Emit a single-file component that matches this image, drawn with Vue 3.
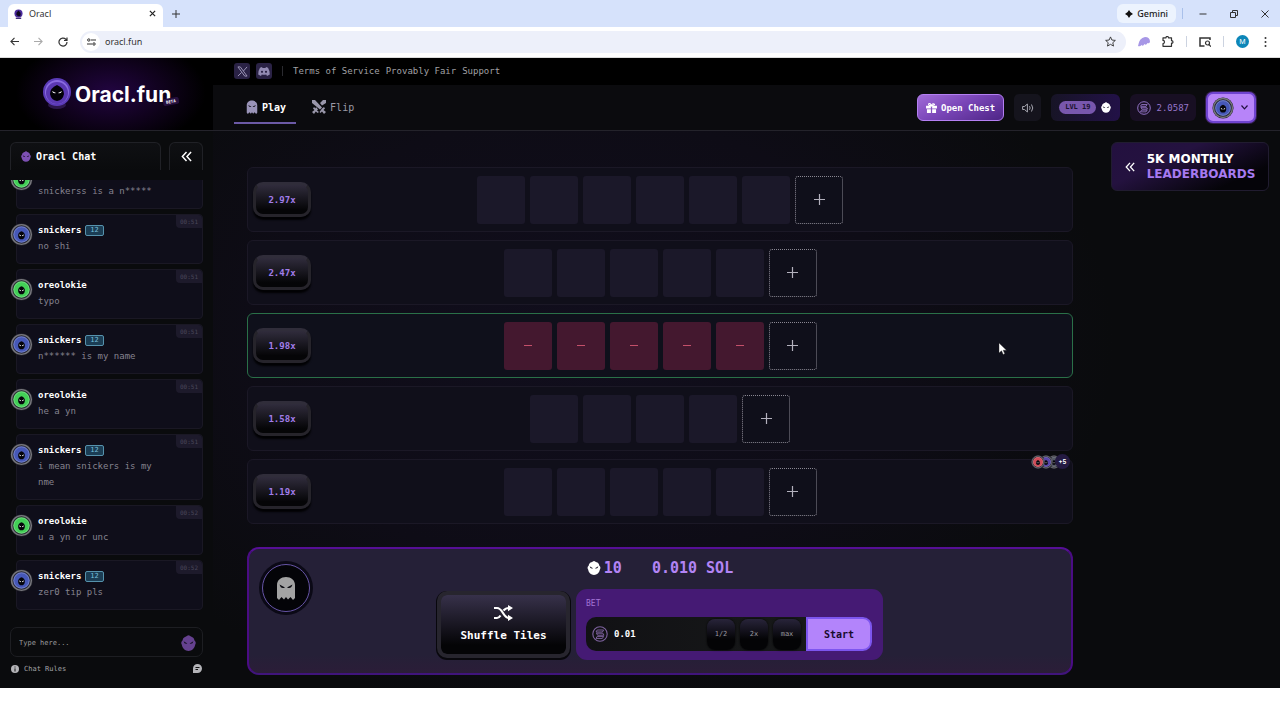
<script setup>
import { ref } from 'vue'

const address = ref('oracl.fun')
const bet = ref('0.01')
const draft = ref('')

const messages = [
  { tone: 'green', text: 'snickerss is a n*****' },
  { user: 'snickers', tone: 'blue', level: 12, time: '00:51', text: 'no shi' },
  { user: 'oreolokie', tone: 'green', time: '00:51', text: 'typo' },
  { user: 'snickers', tone: 'blue', level: 12, time: '00:51', text: 'n****** is my name' },
  { user: 'oreolokie', tone: 'green', time: '00:51', text: 'he a yn' },
  { user: 'snickers', tone: 'blue', level: 12, time: '00:51', text: 'i mean snickers is my nme' },
  { user: 'oreolokie', tone: 'green', time: '00:52', text: 'u a yn or unc' },
  { user: 'snickers', tone: 'blue', level: 12, time: '00:52', text: 'zer0 tip pls' }
]

const rows = [
  { mult: '2.97x', tiles: 6 },
  { mult: '2.47x', tiles: 5 },
  { mult: '1.98x', tiles: 5, active: true },
  { mult: '1.58x', tiles: 4 },
  { mult: '1.19x', tiles: 5, players: true }
]
</script>

<template>
  <div class="screen">
    <svg class="defs" aria-hidden="true">
      <symbol id="mask" viewBox="0 0 20 21">
        <path d="M10 0C11.500 0 12 1.500 14 2C17 3 17.500 5 18 7C20 8.500 20 11 19 12.500C18 18 14.500 21 10 21S2 18 1 12.500C0 11 0 8.500 2 7C2.500 5 3 3 6 2C8 1.500 8.500 0 10 0Z" fill="currentColor" />
        <path d="M3.500 8L8.500 11Q4.500 12.500 3.500 8ZM16.500 8L11.500 11Q15.500 12.500 16.500 8Z" fill="#141020" />
      </symbol>
      <symbol id="ghost" viewBox="0 0 20 24">
        <path d="M1 22V9C1 4 5 1 10 1S19 4 19 9V22L17 24L14.500 21L12 23.500L10 21L8 23.500L5.500 21L3 24Z" fill="currentColor" />
        <path d="M3.500 8.500L9 11.500Q5 13.500 3.500 8.500ZM16.500 8.500L11 11.500Q15 13.500 16.500 8.500Z" fill="#0a0a10" />
      </symbol>
      <symbol id="coin" viewBox="0 0 20 20">
        <circle cx="10" cy="10" r="9" fill="none" stroke="currentColor" stroke-width="1.400" />
        <path d="M6.500 5H14.500L13 7.500H5ZM5.500 9H13.500L15 11.500H7ZM6.500 13H14.500L13 15.500H5Z" fill="none" stroke="currentColor" stroke-width="1.200" stroke-linejoin="round" />
      </symbol>
      <symbol id="face" viewBox="0 0 24 24">
        <circle cx="12" cy="12" r="11.500" fill="#26262e" />
        <circle cx="12" cy="12" r="10.300" fill="none" stroke="#77777d" stroke-width="1.500" />
        <circle cx="12" cy="12" r="8.600" fill="currentColor" />
        <circle cx="12" cy="12" r="8" fill="none" stroke="#fff" stroke-opacity=".25" />
        <path d="M12 8.500Q16 10 15.500 13.500Q15 17 12 17T8.500 13.500Q8 10 12 8.500Z" fill="#05050b" />
        <path d="M9.700 12.500L11.300 13.300M14.300 12.500L12.700 13.300" stroke="#fff" />
      </symbol>
      <symbol id="chevrons" viewBox="0 0 12 12">
        <path d="M6 1L1.500 6L6 11M11 1L6.500 6L11 11" fill="none" stroke="currentColor" stroke-width="1.600" />
      </symbol>
    </svg>

    <header class="browser">
      <div class="tabs">
        <div class="tab">
          <svg class="favicon" viewBox="0 0 20 22"><circle cx="10" cy="10" r="9" fill="#4a2a9c" /><path d="M10 3Q16 7 15 12T10 16T5 12Q4 7 10 3Z" fill="#100720" /><path d="M4 19H16V22H4Z" fill="#3b2277" /></svg>
          <span class="tab-name">Oracl</span>
          <button class="plain" aria-label="Close tab"><svg width="7" height="7" viewBox="0 0 8 8"><path d="M1 1L7 7M7 1L1 7" stroke="#222" stroke-width="1.400" /></svg></button>
        </div>
        <button class="plain new-tab" aria-label="New tab"><svg width="8" height="8" viewBox="0 0 8 8"><path d="M4 0V8M0 4H8" stroke="#333" /></svg></button>
        <button class="gemini"><svg width="8" height="8" viewBox="0 0 10 10"><path d="M5 0Q6.500 3.500 10 5Q6.500 6.500 5 10Q3.500 6.500 0 5Q3.500 3.500 5 0Z" fill="#111" /></svg>Gemini</button>
        <span class="bar-sep"></span>
        <div class="window">
          <button class="plain" aria-label="Minimise"><svg width="8" height="8" viewBox="0 0 8 8"><path d="M0.500 4H7.500" stroke="#333" /></svg></button>
          <button class="plain" aria-label="Restore"><svg width="8" height="8" viewBox="0 0 8 8"><path d="M.5 2.500H5.500V7.500H.5ZM2.500 2V.5H7.500V5.500H6" fill="none" stroke="#333" /></svg></button>
          <button class="plain" aria-label="Close window"><svg width="8" height="8" viewBox="0 0 8 8"><path d="M.5 .5L7.500 7.500M7.500 .5L.5 7.500" stroke="#333" /></svg></button>
        </div>
      </div>
      <div class="toolbar">
        <div class="history">
          <button class="plain" aria-label="Back"><svg width="9" height="9" viewBox="0 0 10 10"><path d="M10 5H1M5 1L1 5L5 9" fill="none" stroke="#333" stroke-width="1.200" /></svg></button>
          <button class="plain" aria-label="Forward"><svg width="9" height="9" viewBox="0 0 10 10"><path d="M0 5H9M5 1L9 5L5 9" fill="none" stroke="#aaa" stroke-width="1.200" /></svg></button>
          <button class="plain" aria-label="Reload"><svg width="10" height="10" viewBox="0 0 10 10"><path d="M9 5A4 4 0 1 1 7.800 2.200L9 3.400M9 .5V3.500H6" fill="none" stroke="#333" stroke-width="1.200" /></svg></button>
        </div>
        <div class="omnibox">
          <span class="site"><svg width="9" height="8" viewBox="0 0 9 8"><path d="M4 2H9M0 6H5" stroke="#333" stroke-width="1.200" /><circle cx="1.800" cy="2" r="1.200" fill="none" stroke="#333" /><circle cx="7" cy="6" r="1.200" fill="none" stroke="#333" /></svg></span>
          <input v-model="address" aria-label="Address" />
          <button class="plain" aria-label="Bookmark"><svg width="11" height="11" viewBox="0 0 12 12"><path d="M6 1L7.500 4.400L11.300 4.800L8.500 7.300L9.300 11L6 9.100L2.700 11L3.500 7.300L.7 4.800L4.500 4.400Z" fill="none" stroke="#333" stroke-linejoin="round" /></svg></button>
        </div>
        <div class="extensions">
          <svg width="12" height="10" viewBox="0 0 12 10"><path d="M0 9Q1 1 7 0Q12 0 12 5Q11 7 9.500 6Q8 9 6.500 7Q5 10 3.500 8Q2 10 0 9Z" fill="#a797e6" /></svg>
          <svg width="12" height="11" viewBox="0 0 12 11"><path d="M1 1.800H4Q4 .5 5.200 .5T6.500 1.800H9.500V4.700Q11 4.700 11 6T9.500 7.200V10.300H1V7.700Q2.500 7.500 2.500 6T1 4.400Z" fill="none" stroke="#333" stroke-width="1.200" stroke-linejoin="round" /></svg>
          <span class="bar-sep pale"></span>
          <svg width="12" height="10" viewBox="0 0 12 10"><path d="M5.500 9H1V1H11V3" fill="none" stroke="#333" stroke-width="1.500" /><circle cx="8.500" cy="6" r="2" fill="none" stroke="#333" stroke-width="1.200" /><path d="M10 7.500L12 9.700" stroke="#333" stroke-width="1.200" /></svg>
          <span class="bar-sep pale"></span>
          <span class="profile">M</span>
          <svg class="menu" width="3" height="10" viewBox="0 0 3 10"><circle cx="1.500" cy="1" r="1" fill="#333" /><circle cx="1.500" cy="5" r="1" fill="#333" /><circle cx="1.500" cy="9" r="1" fill="#333" /></svg>
        </div>
      </div>
    </header>

    <div class="site-page">
      <div class="brand">
        <svg width="30" height="34" viewBox="0 0 30 34"><ellipse cx="15" cy="28" rx="9" ry="4" fill="#2c174d" /><circle cx="15" cy="15" r="14" fill="#5b3bb8" /><circle cx="15" cy="15" r="12" fill="#8a6be0" /><circle cx="15" cy="16" r="11" fill="#5a38b2" /><path d="M15 8Q22 11 22 17Q21 23 15 24Q9 23 8 17Q8 11 15 8Z" fill="#020108" /><path d="M10 14L14 16Q11 17 10 14ZM20 14L16 16Q19 17 20 14Z" fill="#fff" /></svg>
        <span class="brand-name">Oracl.fun</span>
        <span class="beta">BETA</span>
      </div>

      <div class="top">
        <nav class="links">
          <a href="#x" class="social" aria-label="X"><svg width="11" height="11" viewBox="0 0 12 12"><path d="M1 1H3.600L11 11H8.400ZM11 1L7 5.500M5 7L1 11" fill="none" stroke="#a29bbd" /></svg></a>
          <a href="#discord" class="social" aria-label="Discord"><svg width="12" height="9" viewBox="0 0 12 9"><path d="M4 0L2 .8Q0 4 .2 7.500L3 9L3.800 7.500Q6 8 8.200 7.500L9 9L11.800 7.500Q12 4 10 .8L8 0L7.500 1Q6 .8 4.500 1Z" fill="#938bb4" /><circle cx="4" cy="4.800" r="1.100" fill="#2a2245" /><circle cx="8" cy="4.800" r="1.100" fill="#2a2245" /></svg></a>
          <span class="divider"></span>
          <a href="#terms">Terms of Service</a>
          <a href="#fair">Provably Fair</a>
          <a href="#support">Support</a>
        </nav>
        <div class="navbar">
          <nav class="modes">
            <a href="#play" class="mode current"><svg width="12" height="14" class="mode-ghost"><use href="#ghost" /></svg>Play</a>
            <a href="#flip" class="mode"><svg width="14" height="14" viewBox="0 0 14 14"><path d="M0 0H3L10 7.500L8 9.500L0 3ZM14 0H11L8 3L10 5.500L14 3ZM4 7L6 9.500L5 10.500L7 12L5.500 13L3.800 11.500L2 14L0 12L2.500 10L1 8.500L2 7L3.500 8.500ZM10 8.500L12 7L13 8.500L11.500 10L14 12L12 14L10 11.500L8.500 13L7.500 12Z" fill="#9a97aa" /></svg>Flip</a>
          </nav>
          <div class="account">
            <button class="chest"><svg width="11" height="10" viewBox="0 0 12 11"><path d="M0 3H5.300V6H0ZM6.700 3H12V6H6.700ZM1 7H5.300V11H1ZM6.700 7H11V11H6.700Z" fill="#fff" /><path d="M6 3Q2 3 3 1T6 3Q7 0 8.800 1T6 3" fill="none" stroke="#fff" stroke-width="1.200" /></svg>Open Chest</button>
            <button class="sound" aria-label="Sound"><svg width="12" height="10" viewBox="0 0 12 10"><path d="M.6 3.500H2.500L5.400 1V9L2.500 6.500H.6ZM7.500 3.200Q8.800 5 7.500 6.800M9.500 1.500Q12 5 9.500 8.500" fill="none" stroke="#a6a6b0" /></svg></button>
            <div class="level"><span class="lvl">LVL 19</span><svg width="10" height="11" class="white"><use href="#mask" /></svg></div>
            <div class="balance"><svg width="14" height="14"><use href="#coin" /></svg>2.0587</div>
            <button class="user" aria-label="Account"><svg width="22" height="22" class="blue"><use href="#face" /></svg><svg width="7" height="5" viewBox="0 0 7 5"><path d="M.5 .5L3.500 3.800L6.500 .5" fill="none" stroke="#21103f" stroke-width="1.200" /></svg></button>
          </div>
        </div>
      </div>

      <aside class="chat">
        <div class="chat-head">
          <h2><svg width="10" height="11" class="violet"><use href="#mask" /></svg>Oracl Chat</h2>
          <button aria-label="Collapse chat"><svg width="11" height="11"><use href="#chevrons" /></svg></button>
        </div>
        <div class="feed">
          <article v-for="(m, i) in messages" :key="i" class="message">
            <svg class="avatar" :class="m.tone"><use href="#face" /></svg>
            <div class="who"><strong v-if="m.user">{{ m.user }}</strong><span v-if="m.level" class="rank">{{ m.level }}</span></div>
            <p>{{ m.text }}</p>
            <time v-if="m.time">{{ m.time }}</time>
          </article>
        </div>
        <div class="compose">
          <input v-model="draft" placeholder="Type here..." aria-label="Chat message" />
          <svg width="15" height="16" class="dim"><use href="#mask" /></svg>
        </div>
        <div class="chat-foot">
          <a href="#rules"><svg width="8" height="8" viewBox="0 0 8 8"><circle cx="4" cy="4" r="4" fill="#b4b4b8" /><path d="M4 1.500V2.500M4 3.400V6.500" stroke="#111" /></svg>Chat Rules</a>
          <button class="plain" aria-label="Chat options"><svg width="9" height="9" viewBox="0 0 9 9"><path d="M4.500 0A4.500 4.500 0 1 1 4.500 9H0V4.500A4.500 4.500 0 0 1 4.500 0Z" fill="#b4b4b8" /><path d="M2.500 3.500H6.500M2.500 5.500H5" stroke="#111" /></svg></button>
        </div>
      </aside>

      <main class="game">
        <section class="board">
          <div v-for="row in rows" :key="row.mult" class="row" :class="{ active: row.active }">
            <button class="mult">{{ row.mult }}</button>
            <div class="tiles">
              <span v-for="n in row.tiles" :key="n" class="tile"><i v-if="row.active"></i></span>
              <button class="add" aria-label="Add tile"><svg width="11" height="11" viewBox="0 0 11 11"><path d="M5.500 0V11M0 5.500H11" stroke="#b3b1bd" stroke-width="1.200" /></svg></button>
            </div>
            <div v-if="row.players" class="players">
              <svg class="red"><use href="#face" /></svg><svg class="indigo"><use href="#face" /></svg><svg class="grey"><use href="#face" /></svg><span>+5</span>
            </div>
            <svg v-if="row.active" class="pointer" viewBox="0 0 10 14"><path d="M1 1V11L3.500 8.800L5.200 12.500L6.800 11.800L5.200 8.200H8.500Z" fill="#fff" stroke="#222" stroke-width=".4" /></svg>
          </div>
        </section>

        <section class="console">
          <div class="ghost-badge"><svg width="20" height="24"><use href="#ghost" /></svg></div>
          <div class="play-area">
            <div class="totals"><span class="count"><svg width="14" height="14" class="white"><use href="#mask" /></svg>10</span><span>0.010 SOL</span></div>
            <div class="actions">
              <button class="shuffle"><svg width="19" height="16" viewBox="0 0 19 16"><path d="M0 3H3Q6 3 9 8T15 13H16M0 13H3Q5 13 6.500 10.500M9.500 5.500Q11.500 3 15 3H16" fill="none" stroke="#fff" stroke-width="2.200" /><path d="M14 0L19 3L14 6.300ZM14 9.700L19 13L14 16Z" fill="#fff" /></svg>Shuffle Tiles</button>
              <div class="bet">
                <label for="bet">BET</label>
                <div class="bet-line">
                  <svg width="16" height="16"><use href="#coin" /></svg>
                  <input id="bet" v-model="bet" />
                  <button class="quick">1/2</button>
                  <button class="quick">2x</button>
                  <button class="quick">max</button>
                  <button class="start">Start</button>
                </div>
              </div>
            </div>
          </div>
        </section>
      </main>

      <aside class="side">
        <button class="leaders"><svg width="10" height="10"><use href="#chevrons" /></svg><span>5K MONTHLY<br /><b>LEADERBOARDS</b></span></button>
      </aside>
    </div>
  </div>
</template>

<style>
body { background: #fff; }
</style>

<style scoped>
.screen, .screen * { box-sizing: border-box; }
.screen { font-family: "DejaVu Sans Mono", "Liberation Mono", monospace; font-size: 9px; color: #fff; }
.screen svg { display: block; flex: none; }
.screen .defs { position: absolute; width: 0; height: 0; }
button { font-family: inherit; color: inherit; border: 0; padding: 0; cursor: pointer; display: flex; align-items: center; justify-content: center; }
input { font-family: inherit; border: 0; outline: 0; background: none; padding: 0; min-width: 0; }
a { color: inherit; text-decoration: none; }
.plain { background: none; }

.browser { font-family: "Noto Sans", sans-serif; color: #333; }
.tabs { height: 27px; background: #d6e2fb; display: flex; align-items: center; padding: 0 11px 0 8px; }
.tab { align-self: flex-end; width: 155px; height: 23px; background: #fff; border-radius: 6px 6px 0 0; display: flex; align-items: center; gap: 6px; padding: 0 7px 4px 6px; }
.favicon { width: 9px; height: 10px; }
.tab-name { flex: 1; font-size: 9px; }
.new-tab { margin-left: 9px; margin-right: auto; }
.gemini { height: 19px; padding: 0 8px; gap: 4px; border-radius: 6px; background: #ecf3fe; font-size: 9px; font-weight: 500; color: #222; }
.bar-sep { width: 1px; height: 11px; background: #a9c0ea; margin-left: 6px; }
.bar-sep.pale { background: #ccd3e0; margin: 0; }
.window { display: flex; gap: 23px; margin-left: 16px; }
.toolbar { height: 31px; background: #fff; border-bottom: 1px solid #dcdcdc; display: flex; align-items: center; padding: 0 13px 1px 10px; }
.history { display: flex; gap: 15px; }
.omnibox { flex: 1; height: 22px; margin: 0 12px; border-radius: 11px; background: #edf0fa; display: flex; align-items: center; padding: 0 10px 0 2px; gap: 5px; }
.site { width: 18px; height: 18px; border-radius: 9px; background: #fff; display: grid; place-items: center; }
.omnibox input { flex: 1; font-size: 9px; color: #333; }
.extensions { display: flex; align-items: center; gap: 12px; }
.menu { margin-left: 3px; }
.profile { width: 13px; height: 13px; border-radius: 7px; background: #0d86b8; color: #fff; font-size: 7px; display: grid; place-items: center; }

.site-page {
  display: grid; grid-template-columns: 213px minmax(0, 1fr) 207px; grid-template-rows: 73px auto;
  background: radial-gradient(ellipse 42% 60% at 45% 45%, #110e1d 0%, #0e0c16 60%, #0a0b0d 100%);
}
.brand { position: relative; display: flex; align-items: center; padding-left: 42px; gap: 3px; background: radial-gradient(ellipse 95px 55px at 52% 48%, #220541 0%, #10021d 55%, #000 100%); border-bottom: 1px solid #24232b; }
.brand-name { font-family: Inter, sans-serif; font-weight: 700; font-size: 21px; }
.beta { position: absolute; left: 163px; top: 40px; font-size: 4px; font-weight: 700; padding: 1px 3px; border-radius: 2px; background: #26103f; transform: rotate(-10deg); }
.top { grid-column: 2 / 4; display: grid; grid-template-rows: 27px 46px; }
.links { background: #000; display: flex; align-items: center; gap: 6px; padding: 0 0 1px 21px; color: #a1a1a5; }
.social { width: 16px; height: 16px; border-radius: 3px; background: #2a2245; display: grid; place-items: center; }
.divider { width: 1px; height: 10px; background: #2a2a2f; margin: 0 4px; }
.navbar { background: #0b0b0e; border-bottom: 1px solid #24232b; display: flex; align-items: center; justify-content: space-between; padding: 0 24px 0 21px; }
.modes { display: flex; align-self: stretch; gap: 4px; }
.mode { display: flex; align-items: center; gap: 4px; padding: 7px 10px 0 12px; margin-bottom: 6px; border-bottom: 2px solid transparent; font-size: 10px; color: #9a98a5; }
.mode.current { border-color: #6c5aa6; color: #fff; font-weight: 700; }
.mode-ghost { color: #9a94b8; }
.account { display: flex; align-items: center; gap: 10px; }
.chest { height: 27px; padding: 0 8px; gap: 4px; border-radius: 6px; border: 1px solid #b47ff2; background: linear-gradient(155deg, #a16cd8 0%, #7a46b8 45%, #4e2586 100%); font-weight: 700; font-size: 9px; }
.sound { width: 27px; height: 27px; border-radius: 5px; background: #15141d; }
.level { height: 27px; padding: 0 9px 0 8px; gap: 5px; border-radius: 6px; display: flex; align-items: center; background: linear-gradient(90deg, #171426, #221147); }
.lvl { height: 13px; padding: 0 6px; border-radius: 7px; background: #7857ad; color: #1b1230; font-size: 7px; font-weight: 700; line-height: 13px; }
.white { color: #fff; }
.balance { height: 27px; padding: 0 7px; gap: 5px; border-radius: 6px; display: flex; align-items: center; background: #180f23; color: #9676cb; }
.user { width: 50px; height: 31px; gap: 7px; padding-right: 2px; border-radius: 7px; background: #b784f9; border: 2px solid #7044d0; box-shadow: 0 0 0 1px #35204f; }
.blue { color: #4658b8; }
.green { color: #43cf57; }
.red { color: #d04c58; }
.indigo { color: #5846a8; }
.grey { color: #555a66; }
.violet { color: #7d50b3; }

.chat { background: #0a0b0d; padding: 11px 10px 12px; }
.chat-head { display: flex; gap: 8px; height: 28px; }
.chat-head h2, .chat-head button { margin: 0; border: 1px solid #202126; border-bottom: 0; border-radius: 6px 6px 0 0; background: linear-gradient(#0f1013, #0a0b0d); }
.chat-head h2 { flex: 1; display: flex; align-items: center; gap: 5px; padding-left: 10px; font-size: 10px; }
.chat-head button { width: 34px; }
.feed { height: 430px; margin-top: 10px; overflow: hidden; display: flex; flex-direction: column; justify-content: flex-end; gap: 5px; }
.message { position: relative; flex: none; margin-left: 6px; padding: 7px 40px 9px 21px; border: 1px solid #1a1824; border-radius: 4px; background: #0f0e1a; }
.message .avatar { position: absolute; left: -7px; top: 8px; width: 23px; height: 23px; }
.who { display: flex; align-items: center; gap: 4px; height: 16px; }
.rank { height: 11px; padding: 0 4px; border: 1px solid #5692ac; border-radius: 2px; background: #1b3d54; color: #77bddc; font-size: 7px; line-height: 9px; }
.message p { margin: 0; line-height: 16px; color: #85838f; }
.message time { position: absolute; right: 0; top: 0; padding: 0 4px; height: 13px; line-height: 13px; font-size: 6px; background: #1d1a2b; color: #4a475a; border-radius: 0 4px 0 4px; }
.compose { height: 30px; margin-top: 17px; padding: 2px 6px 0 8px; border: 1px solid #1d1e22; border-radius: 7px; display: flex; align-items: center; }
.compose input { flex: 1; font-size: 7px; color: #fff; }
.compose input::placeholder { color: #9b9b9f; opacity: 1; }
.dim { color: #65418f; }
.chat-foot { display: flex; justify-content: space-between; margin-top: 7px; font-size: 7px; color: #a2a2a6; padding: 0 1px; }
.chat-foot a { display: flex; align-items: center; gap: 5px; }

.game { padding: 36px 0 13px 34px; }
.board { display: grid; gap: 8px; }
.row { position: relative; height: 65px; display: grid; grid-template-columns: 1fr auto 1fr; align-items: center; padding: 0 5px; border: 1px solid #1b1826; border-radius: 6px; background: #100f1a; }
.row.active { border-color: #2a7048; background: #0f101b; }
.mult { width: 58px; height: 35px; border-radius: 10px; border: 3px solid #26242b; border-top-color: #302d3a; background: linear-gradient(#302c3c, #050507 85%); box-shadow: 0 3px 2px #020204; color: #a17de9; font-weight: 700; font-size: 9px; }
.tiles { display: flex; gap: 5px; }
.tile, .add { width: 48px; height: 48px; border-radius: 3px; background: #1b1829; display: grid; place-items: center; }
.active .tile { background: #44182f; }
.tile i { width: 8px; height: 1px; background: #c4506a; }
.add { background: #0f0f1a; border: 1px dotted #8a8792; }
.players { position: absolute; right: 2px; top: -6px; display: flex; align-items: center; }
.players svg { width: 14px; height: 14px; margin-right: -6px; }
.players svg:first-child { z-index: 2; }
.players svg:nth-child(2) { z-index: 1; }
.players span { z-index: 3; width: 15px; height: 15px; border-radius: 8px; background: #241a42; font-family: Inter, sans-serif; font-size: 6px; font-weight: 700; line-height: 15px; text-align: center; }
.pointer { position: absolute; right: 64px; top: 28px; width: 10px; height: 14px; }

.console { margin-top: 23px; border: 2px solid #4d0f87; border-color: #560f96 #4a0c84 #40147c; border-radius: 12px; background: linear-gradient(#252037 85%, #2b1d38); display: grid; grid-template-columns: 1fr auto 1fr; padding: 10px 12px 13px; }
.ghost-badge { width: 48px; height: 48px; margin: 5px 1px; border-radius: 50%; background: #040408; border: 1px solid #6654a6; box-shadow: 0 0 0 3px #0b0916; display: grid; place-items: center; color: #a3a3a3; }
.totals { display: flex; justify-content: center; gap: 30px; height: 18px; line-height: 18px; font-size: 15px; font-weight: 700; color: #b384f5; margin-bottom: 12px; }
.count { display: flex; align-items: center; gap: 3px; }
.actions { display: flex; align-items: center; gap: 6px; }
.shuffle { flex-direction: column; gap: 8px; width: 133px; height: 67px; padding-bottom: 2px; border-radius: 10px; border: 4px solid #27252e; background: linear-gradient(#37314a, #040406 85%) padding-box, #27252e; box-shadow: 0 1px 0 1px #08070c; font-size: 11px; font-weight: 700; }
.bet { width: 307px; height: 71px; padding: 9px 11px 9px 10px; border-radius: 11px; background: #451a74; }
.bet label { display: block; line-height: 11px; margin-bottom: 8px; color: #a374d4; font-size: 8px; }
.bet-line { height: 34px; display: flex; align-items: center; gap: 5px; padding-left: 6px; border-radius: 10px; background: linear-gradient(90deg, #111114, #191b1b); }
.bet-line input { flex: 1; width: 0; padding-left: 1px; font-size: 9px; font-weight: 700; color: #fff; }
.bet-line svg { color: #7e629f; }
.quick { width: 28px; height: 31px; border-radius: 8px; background: linear-gradient(#28243a, #040406 65%); color: #99979f; font-size: 7px; box-shadow: 0 0 2px #000; }
.start { width: 66px; height: 34px; border: 2px solid #7d55ef; border-radius: 0 9px 9px 0; background: #b384fb; color: #190c2e; font-size: 10px; font-weight: 700; }

.side { padding: 11px 11px 0 38px; }
.leaders { width: 100%; height: 49px; gap: 12px; border-radius: 6px; border: 1px solid #211c30; background: linear-gradient(155deg, #23103f 0%, #24123f 35%, #050409 80%); font-family: "DejaVu Sans", sans-serif; font-weight: 700; font-size: 12px; line-height: 15px; text-align: left; }
.leaders b { color: #a67af0; }
</style>
